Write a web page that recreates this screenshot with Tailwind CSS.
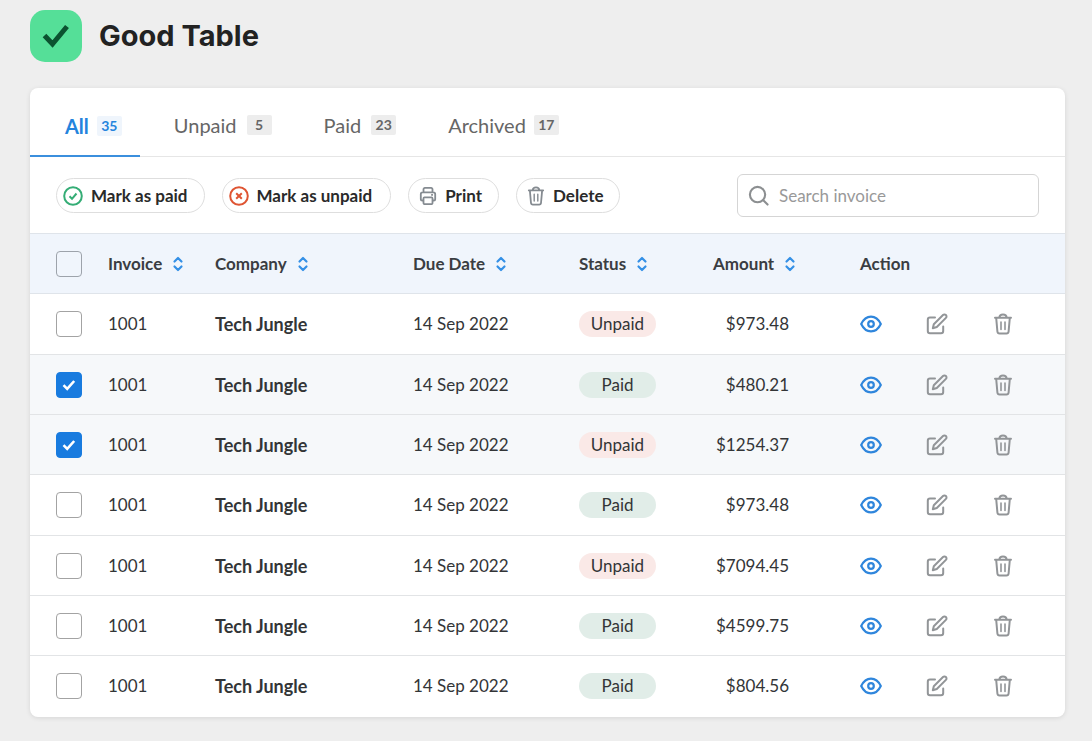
<!DOCTYPE html>
<html lang="en">
<head>
<meta charset="utf-8">
<meta name="viewport" content="width=device-width, initial-scale=1">
<title>Good Table</title>
<script src="https://cdn.jsdelivr.net/npm/@tailwindcss/browser@4"></script>
</head>
<body class="min-h-screen bg-[#eeeeee] font-['Lato','Open_Sans',sans-serif] text-[17px] leading-6 text-[#333537]">
<svg class="hidden" aria-hidden="true">
  <symbol id="sort" viewBox="0 0 12 16"><path d="M2.500 5.500L6 2l3.500 3.500M2.500 10.500L6 14l3.500-3.500" fill="none" stroke="currentColor" stroke-width="2.200" stroke-linecap="round" stroke-linejoin="round"/></symbol>
  <symbol id="eye" viewBox="0 0 22 22"><g fill="none" stroke="currentColor" stroke-width="2.200"><path d="M1.200 11C3.400 6.400 6.800 3.600 11 3.600S18.600 6.400 20.800 11C18.600 15.600 15.200 18.400 11 18.400S3.400 15.600 1.200 11z" stroke-linejoin="round"/><circle cx="11" cy="11" r="2.800"/></g></symbol>
  <symbol id="edit" viewBox="0 0 22 22"><g fill="none" stroke="currentColor" stroke-width="2" stroke-linecap="round" stroke-linejoin="round"><path d="M9 4.500H4a2.200 2.200 0 0 0-2.200 2.200V18A2.200 2.200 0 0 0 4 20.200h11a2.200 2.200 0 0 0 2.200-2.200v-4.500"/><path d="M6.800 15.200l1-4L17 2a1.950 1.950 0 0 1 2.900 2.900L10.800 14z"/></g></symbol>
  <symbol id="trash" viewBox="0 0 20 22"><g fill="none" stroke="currentColor" stroke-width="2" stroke-linecap="round" stroke-linejoin="round"><path d="M2 4.800h16M6.300 4.500C6.500 2.500 7.700 1.500 10 1.500s3.500 1 3.700 3M3.200 5l1.200 13.500a2.200 2.200 0 0 0 2.200 2h6.800a2.200 2.200 0 0 0 2.200-2L16.800 5"/><path d="M8 9v7.500M12 9v7.500" stroke-width="1.600"/></g></symbol>
</svg>

<header class="flex items-center gap-[17px] px-[30px] pt-2.5">
  <svg class="size-[52px]" viewBox="0 0 52 52" aria-hidden="true"><rect width="52" height="52" rx="15" fill="#55df98"/><path d="M14.500 25.500l8 8.500L37 16.500" fill="none" stroke="#0b5230" stroke-width="5"/></svg>
  <h1 class="font-['Inter',sans-serif] text-[29px] leading-9 font-bold text-[#222222]">Good Table</h1>
</header>

<main class="pt-[26px] pr-[27px] pb-6 pl-[30px]">
  <section class="overflow-hidden rounded-lg bg-white shadow-[0_1px_5px_rgba(0,0,0,0.1)]">
    <nav class="flex h-[69px] border-b border-[#e6e6e6] text-xl text-[#666666]" aria-label="Invoice filter">
      <a href="#all" class="-mb-px flex items-center gap-2 border-b-2 border-[#3b8fdd] pt-2 pr-[18px] pl-[35px] font-bold text-[#2484dd]" aria-current="page">All <span class="flex h-5 w-[25px] items-center justify-center rounded-xs bg-[#eff5fc] text-sm font-bold">35</span></a>
      <a href="#unpaid" class="ml-[34px] flex items-center gap-2.5 pt-1.5">Unpaid <span class="flex h-5 w-[25px] items-center justify-center rounded-xs bg-[#ededed] text-sm font-bold">5</span></a>
      <a href="#paid" class="ml-[52px] flex items-center gap-2.5 pt-1.5">Paid <span class="flex h-5 w-[25px] items-center justify-center rounded-xs bg-[#ededed] text-sm font-bold">23</span></a>
      <a href="#archived" class="ml-[52px] flex items-center gap-2 pt-1.5">Archived <span class="flex h-5 w-[25px] items-center justify-center rounded-xs bg-[#ededed] text-sm font-bold">17</span></a>
    </nav>

    <div class="flex items-center justify-between px-[26px] pt-[17px] pb-4">
      <div class="flex gap-[17px] font-bold text-[#2a2a2a]">
        <button type="button" class="flex h-[35px] items-center gap-2 rounded-full border border-[#dedede] pr-4 pl-1.5"><svg class="size-5 text-[#35ad76]" viewBox="0 0 20 20" fill="none" stroke="currentColor" stroke-width="2" aria-hidden="true"><circle cx="10" cy="10" r="8.800"/><path d="M6.500 10.300l2.500 2.500 4.500-5.300"/></svg>Mark as paid</button>
        <button type="button" class="flex h-[35px] items-center gap-2 rounded-full border border-[#dedede] pr-[18px] pl-1.5"><svg class="size-5 text-[#df5533]" viewBox="0 0 20 20" fill="none" stroke="currentColor" stroke-width="2" aria-hidden="true"><circle cx="10" cy="10" r="8.800"/><path d="M7.200 7.200l5.600 5.600M12.800 7.200l-5.600 5.600"/></svg>Mark as unpaid</button>
        <button type="button" class="flex h-[35px] items-center gap-2 rounded-full border border-[#dedede] pr-4 pl-2.5"><svg class="size-[18px] text-[#858b91]" viewBox="0 0 18 20" fill="none" stroke="currentColor" stroke-width="2" stroke-linejoin="round" aria-hidden="true"><path d="M4 6V2.500A1.500 1.500 0 0 1 5.500 1h7A1.500 1.500 0 0 1 14 2.500V6M4 15H2.500A1.500 1.500 0 0 1 1 13.500V8a2 2 0 0 1 2-2h12a2 2 0 0 1 2 2v5.500a1.500 1.500 0 0 1-1.500 1.500H14"/><rect x="4" y="11.500" width="10" height="7.500" rx="1"/><path d="M12.500 8.700h2"/></svg>Print</button>
        <button type="button" class="flex h-[35px] items-center gap-2 rounded-full border border-[#dedede] pr-[15px] pl-2.5"><svg class="h-5 w-[18px] text-[#858b91]" aria-hidden="true"><use href="#trash"/></svg>Delete</button>
      </div>
      <label class="flex h-[43px] w-[302px] items-center gap-2.5 rounded-md border border-[#d5d5d5] px-2.5">
        <svg class="size-[21px] shrink-0 text-[#8c8f91]" viewBox="0 0 22 22" fill="none" stroke="currentColor" stroke-width="2.200" stroke-linecap="round" aria-hidden="true"><circle cx="10" cy="10" r="8"/><path d="M16 16l4.500 4.500"/></svg>
        <input type="search" aria-label="Search invoice" placeholder="Search invoice" class="w-full min-w-0 outline-none placeholder:text-[#999999]">
      </label>
    </div>

    <table class="w-full table-fixed text-left">
      <colgroup><col class="w-[78px]"><col class="w-[107px]"><col><col class="w-[166px]"><col class="w-[134px]"><col class="w-[147px]"><col class="w-[205px]"></colgroup>
      <thead>
        <tr class="h-[60px] border-y border-[#dfe4ea] bg-[#f0f5fc] text-[#3a3d42]">
          <th class="pl-[26px]"><input type="checkbox" aria-label="Select all invoices" class="block size-[26px] appearance-none rounded-sm border border-[#9da3ab]"></th>
          <th class="font-bold"><button type="button" class="flex items-center gap-2.5">Invoice <svg class="h-4 w-3 text-[#3490e6]" aria-hidden="true"><use href="#sort"/></svg></button></th>
          <th class="font-bold"><button type="button" class="flex items-center gap-2.5">Company <svg class="h-4 w-3 text-[#3490e6]" aria-hidden="true"><use href="#sort"/></svg></button></th>
          <th class="font-bold"><button type="button" class="flex items-center gap-2.5">Due Date <svg class="h-4 w-3 text-[#3490e6]" aria-hidden="true"><use href="#sort"/></svg></button></th>
          <th class="font-bold"><button type="button" class="flex items-center gap-2.5">Status <svg class="h-4 w-3 text-[#3490e6]" aria-hidden="true"><use href="#sort"/></svg></button></th>
          <th class="font-bold"><button type="button" class="flex items-center gap-2.5">Amount <svg class="h-4 w-3 text-[#3490e6]" aria-hidden="true"><use href="#sort"/></svg></button></th>
          <th class="font-bold">Action</th>
        </tr>
      </thead>
      <tbody id="rows"></tbody>
    </table>
  </section>
</main>

<template id="row">
  <tr class="h-[60px] border-b border-[#e2e4e6] last:border-b-0 nth-[3n+1]:h-[61px] has-checked:bg-[#f6f8fa]">
    <td class="pl-[26px]"><span class="grid size-[26px]"><input type="checkbox" aria-label="Select invoice" class="peer col-start-1 row-start-1 size-[26px] appearance-none rounded-sm border border-[#a3a3a3] bg-white checked:border-[#187bdf] checked:bg-[#187bdf]"><svg class="pointer-events-none invisible col-start-1 row-start-1 size-[26px] peer-checked:visible" viewBox="0 0 26 26" aria-hidden="true"><path d="M7.500 13.200l3.700 3.700L18.200 9" fill="none" stroke="#fff" stroke-width="2.600"/></svg></span></td>
    <td>1001</td>
    <td class="text-lg font-bold">Tech Jungle</td>
    <td>14 Sep 2022</td>
    <td><span data-status class="flex h-[26px] w-[77px] items-center justify-center rounded-full"></span></td>
    <td data-amount class="pr-[71px] text-right"></td>
    <td><div class="flex items-center gap-11">
      <button type="button" aria-label="View"><svg class="block size-[22px] text-[#2f86dc]" aria-hidden="true"><use href="#eye"/></svg></button>
      <button type="button" aria-label="Edit"><svg class="block size-[22px] text-[#929598]" aria-hidden="true"><use href="#edit"/></svg></button>
      <button type="button" aria-label="Delete"><svg class="block size-[22px] text-[#929598]" aria-hidden="true"><use href="#trash"/></svg></button>
    </div></td>
  </tr>
</template>
<script>
const statusStyle = { Unpaid: "bg-[#fae9e7]", Paid: "bg-[#e1ede8]" };
const invoices = [
  ["Unpaid", "$973.48", false],
  ["Paid", "$480.21", true],
  ["Unpaid", "$1254.37", true],
  ["Paid", "$973.48", false],
  ["Unpaid", "$7094.45", false],
  ["Paid", "$4599.75", false],
  ["Paid", "$804.56", false],
];
for (const [status, amount, selected] of invoices) {
  const row = document.getElementById("row").content.cloneNode(true);
  const pill = row.querySelector("[data-status]");
  pill.textContent = status;
  pill.classList.add(statusStyle[status]);
  row.querySelector("[data-amount]").textContent = amount;
  row.querySelector("input").checked = selected;
  document.getElementById("rows").append(row);
}
</script>
</body>
</html>
